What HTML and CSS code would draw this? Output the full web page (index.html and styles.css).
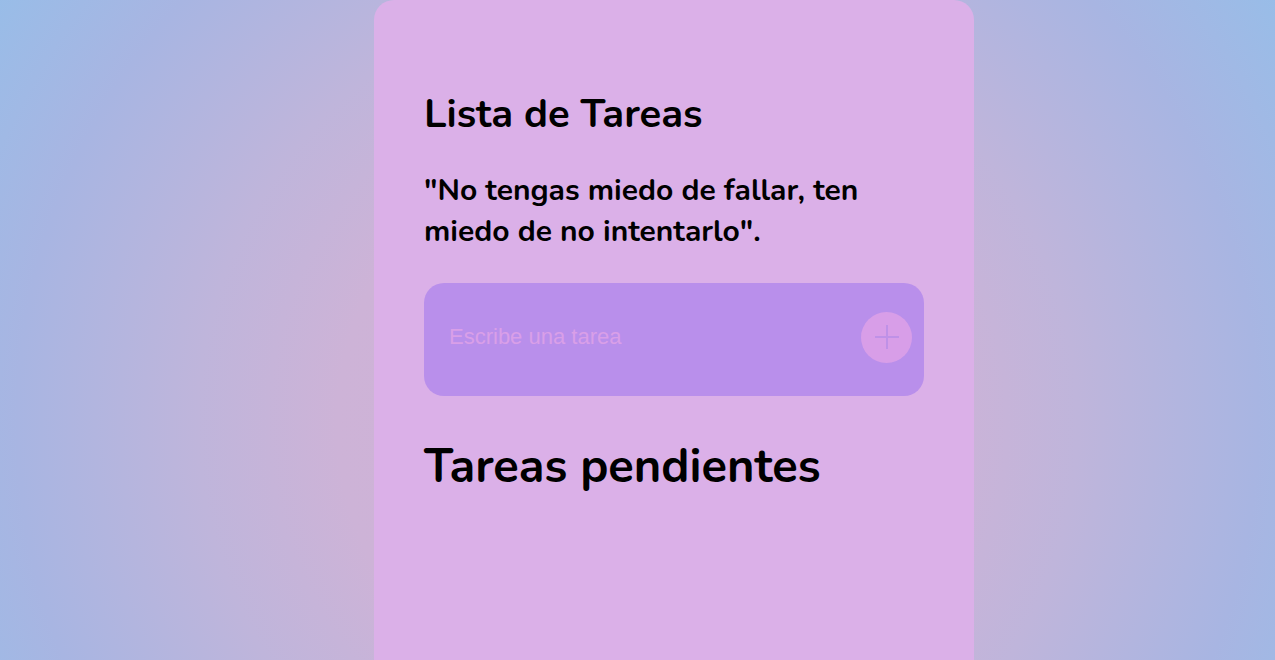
FILE: index.html
```html
<!DOCTYPE html>
<html lang="es">
<head>
<meta charset="utf-8">
<title>Lista de Tareas</title>
<link rel="stylesheet" href="styles.css">
</head>
<body>
<main class="card">
  <h2 class="title">Lista de Tareas</h2>
  <p class="quote">"No tengas miedo de fallar, ten miedo de no intentarlo".</p>
  <form class="task-form">
    <input class="task-input" type="text" placeholder="Escribe una tarea">
    <button class="add-btn" type="button" aria-label="Agregar">
      <svg width="26" height="26" viewBox="0 0 26 26"><path d="M13 1V25M1 13H25" stroke="#bf91e7" stroke-width="2" fill="none"/></svg>
    </button>
  </form>
  <h1 class="pending">Tareas pendientes</h1>
</main>
</body>
</html>
```
FILE: styles.css
```css
html, body {
  margin: 0;
  height: 100%;
}
body {
  background: radial-gradient(circle at 50% 64%, #d3b1d6 0px, #cdb3d7 300px, #bfb5db 440px, #a8b5e2 620px, #98bde8 770px);
  font-family: "Nunito", "Lato", sans-serif;
  display: flex;
  justify-content: center;
  padding-left: 73px;
  box-sizing: border-box;
  overflow: hidden;
}
.card {
  width: 500px;
  min-height: 700px;
  background: #dbb0e8;
  border-radius: 20px;
  padding: 91px 50px 0;
  box-sizing: content-box;
}
.title {
  margin: 0;
  font-size: 40px;
  line-height: 46px;
  font-weight: 700;
  color: #000;
}
.quote {
  margin: 33px 0 0;
  font-size: 30px;
  line-height: 41px;
  font-weight: 700;
  color: #000;
}
.task-form {
  margin-top: 31px;
  height: 113px;
  background: #b98feb;
  border-radius: 20px;
  display: flex;
  align-items: center;
  padding: 0 12px 5px 25px;
  box-sizing: border-box;
}
.task-input {
  flex: 1;
  border: none;
  background: transparent;
  outline: none;
  font-family: "Liberation Sans", Arial, sans-serif;
  font-size: 22px;
  color: #333;
  padding: 0;
}
.task-input::placeholder {
  color: #d99fe8;
}
.add-btn {
  width: 51px;
  height: 51px;
  border-radius: 50%;
  border: none;
  background: #d89ee8;
  display: flex;
  align-items: center;
  justify-content: center;
  padding: 0;
}
.pending {
  margin: 42px 0 0;
  font-size: 47px;
  line-height: 58px;
  font-weight: 700;
  color: #000;
}
```
